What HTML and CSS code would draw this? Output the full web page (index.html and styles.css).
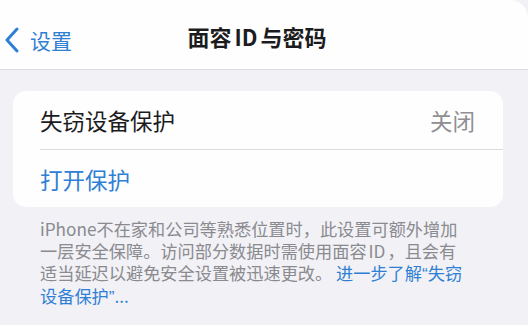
FILE: index.html
```html
<!DOCTYPE html>
<html lang="zh-CN">
<head>
  <meta charset="UTF-8">
  <title>面容ID与密码</title>
  <link rel="stylesheet" href="styles.css">
</head>
<body>

<div class="screen">
  <div class="nav-bar">
    <a class="back" href="#">
      <svg class="chevron" width="16" height="26" viewBox="0 0 16 26">
        <path d="M13 2 L3 13 L13 24" fill="none" stroke="currentColor" stroke-width="3" stroke-linecap="round" stroke-linejoin="round"/>
      </svg>
      <span>设置</span>
    </a>
    <h1 class="nav-title">面容<span class="latin">ID</span>与密码</h1>
  </div>

  <div class="content">
    <div class="card">
      <div class="row">
        <span class="row-label">失窃设备保护</span>
        <span class="row-value">关闭</span>
      </div>
      <div class="row row-action">
        <span>打开保护</span>
      </div>
    </div>

    <p class="footer-note">
      iPhone不在家和公司等熟悉位置时，此设置可额外增加一层安全保障。访问部分数据时需使用面容<span class="latin">ID</span>，且会有适当延迟以避免安全设置被迅速更改。 <a href="#">进一步了解<span class="quote">“</span>失窃设备保护<span class="quote">”</span>...</a>
    </p>
  </div>
</div>

</body>
</html>
```

FILE: styles.css
```css
* {
  box-sizing: border-box;
}

body {
  margin: 0;
  font-family: "Noto Sans CJK SC", sans-serif;
  background: #f1f1f6;
}

.screen {
  width: 528px;
  height: 325px;
  overflow: hidden;
  background: #f1f1f6;
}

.nav-bar {
  position: relative;
  height: 70px;
  background: #fefefe;
  border-bottom: 1px solid #dcdce0;
  border-top-right-radius: 18px;
  display: flex;
  align-items: center;
  justify-content: center;
}

.back {
  position: absolute;
  left: 4px;
  top: 27px;
  display: flex;
  align-items: center;
  gap: 10px;
  color: #2f80d4;
  text-decoration: none;
  font-size: 21px;
  line-height: 26px;
}

.chevron {
  display: block;
}

.nav-title {
  margin: 0;
  padding-right: 14px;
  padding-top: 2px;
  font-size: 22px;
  font-weight: 700;
  color: #1c1c1e;
}

.latin {
  margin: 0 3px;
}

.content {
  padding: 21px 25px 0 13px;
}

.card {
  background: #fefefe;
  border-radius: 13px;
  padding-left: 27px;
}

.row {
  height: 58px;
  display: flex;
  align-items: center;
  justify-content: space-between;
  padding-right: 28px;
  font-size: 22.5px;
  color: #1c1c1e;
}

.row + .row {
  border-top: 1px solid #dcdce0;
}

.row-value {
  color: #8e8e93;
}

.row-action {
  color: #2f80d4;
}

.footer-note {
  margin: 11px 0 0 27px;
  width: 426px;
  font-size: 17.2px;
  line-height: 22px;
  color: #8a8a8f;
}

.footer-note .latin {
  margin: 0 2px;
}

.footer-note a {
  color: #2f80d4;
  text-decoration: none;
}

.quote {
  font-family: "Liberation Sans", sans-serif;
}
```
